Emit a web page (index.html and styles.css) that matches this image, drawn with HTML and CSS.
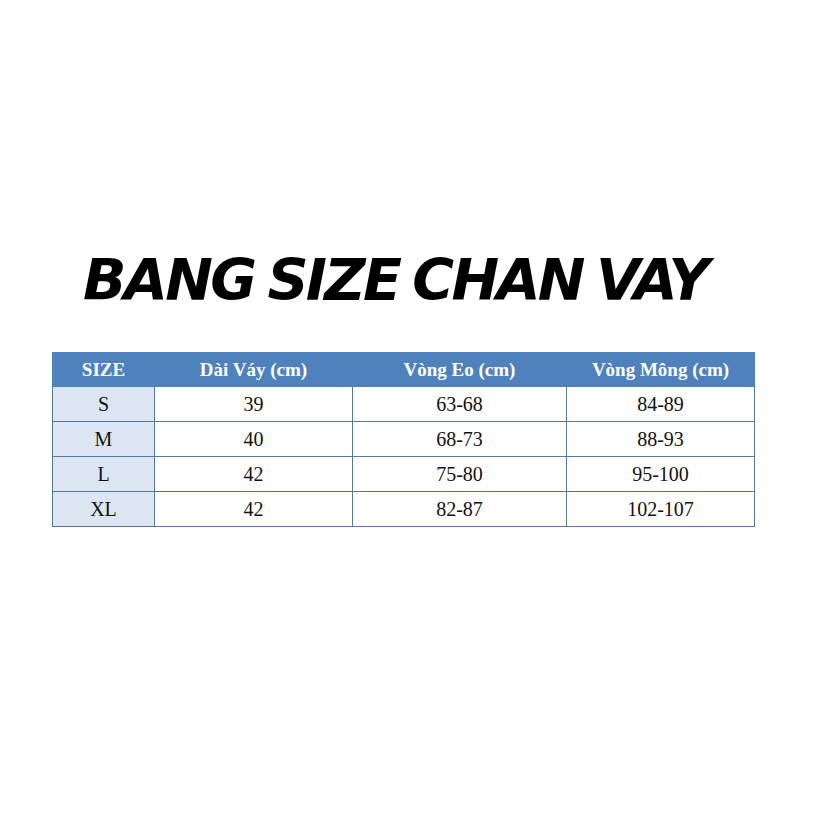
FILE: index.html
```html
<!DOCTYPE html>
<html>
<head>
<meta charset="utf-8">
<link rel="stylesheet" href="styles.css">
</head>
<body>
<div class="page">
  <h1 class="title">BANG SIZE CHAN VAY</h1>
  <table class="size-table">
    <colgroup>
      <col class="c1"><col class="c2"><col class="c3"><col class="c4">
    </colgroup>
    <thead>
      <tr><th>SIZE</th><th>Dài Váy (cm)</th><th>Vòng Eo (cm)</th><th>Vòng Mông (cm)</th></tr>
    </thead>
    <tbody>
      <tr><td class="sz">S</td><td>39</td><td>63-68</td><td>84-89</td></tr>
      <tr><td class="sz">M</td><td>40</td><td>68-73</td><td>88-93</td></tr>
      <tr><td class="sz">L</td><td>42</td><td>75-80</td><td>95-100</td></tr>
      <tr><td class="sz">XL</td><td>42</td><td>82-87</td><td>102-107</td></tr>
    </tbody>
  </table>
</div>
</body>
</html>
```
FILE: styles.css
```css
html, body { margin: 0; padding: 0; background: #fff; }
.page {
  width: 819px;
  height: 819px;
  padding-top: 252px;
  box-sizing: border-box;
}
.title {
  margin: 0 0 0 83px;
  font-family: "DejaVu Sans", sans-serif;
  font-weight: 900;
  font-style: italic;
  font-size: 57px;
  line-height: 57px;
  height: 100px;
  color: #000;
  letter-spacing: -2.7px;
  word-spacing: -4px;
  white-space: nowrap;
}
.size-table {
  margin-left: 52px;
  border-collapse: collapse;
  table-layout: fixed;
  width: 702px;
  font-family: "Liberation Serif", serif;
}
.c1 { width: 102px; }
.c2 { width: 198px; }
.c3 { width: 214px; }
.c4 { width: 188px; }
.size-table th {
  background: #4f81bd;
  color: #fff;
  font-weight: bold;
  font-size: 19px;
  height: 33px;
  padding: 0;
  text-align: center;
  border: 1px solid #4f81bd;
}
.size-table td {
  height: 34px;
  padding: 0;
  font-size: 20px;
  text-align: center;
  color: #111;
  border: 1px solid #55789b;
}
.size-table td.sz { background: #dce6f2; }
```
